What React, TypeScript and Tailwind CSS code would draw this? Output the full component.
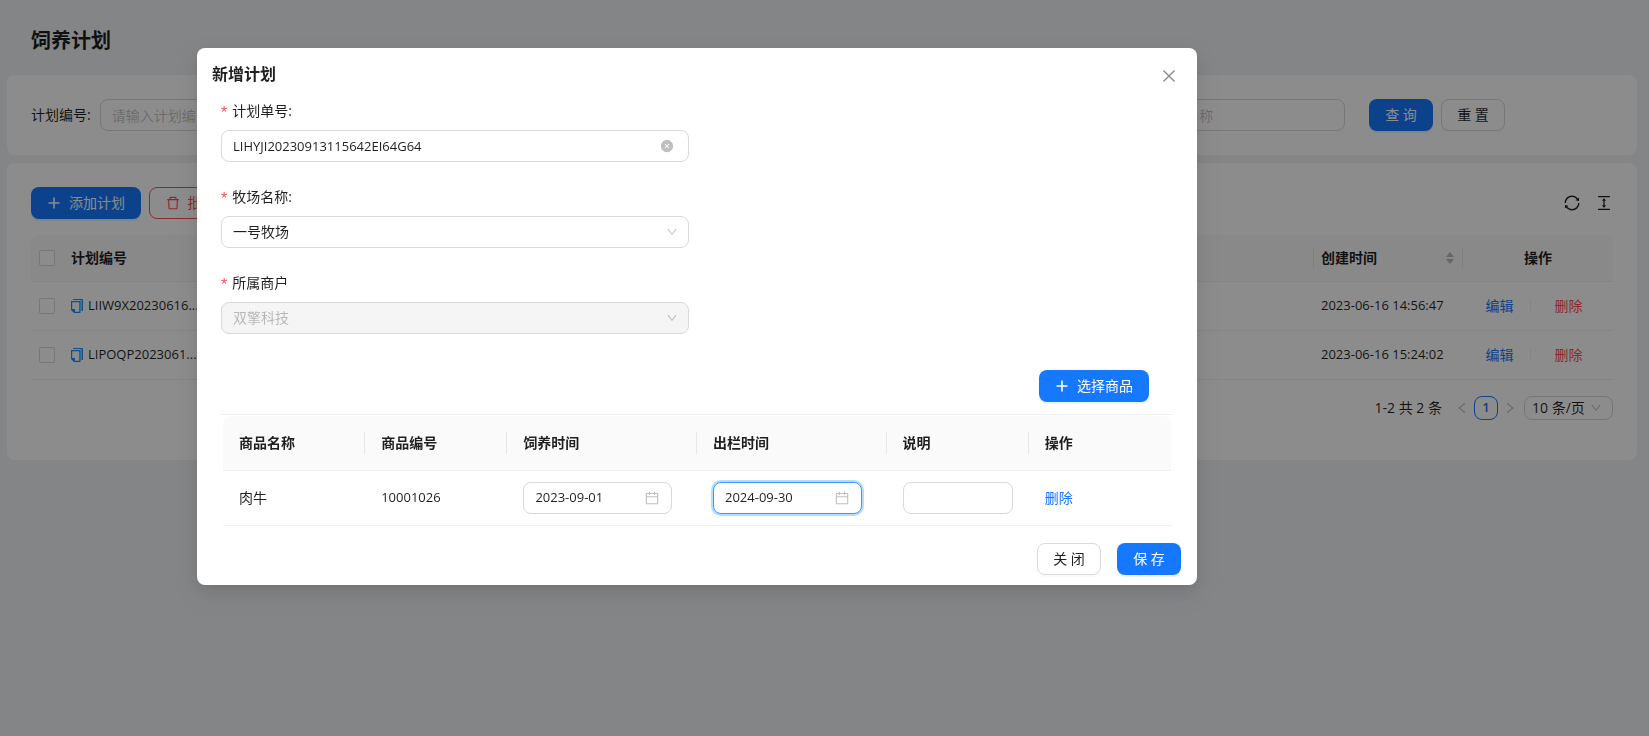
import { useState } from 'react';
import {
  AiFillCloseCircle,
  AiOutlineCalendar,
  AiOutlineClose,
  AiOutlineColumnHeight,
  AiOutlineDelete,
  AiOutlineDown,
  AiOutlineLeft,
  AiOutlineRight,
  AiOutlineSync,
} from 'react-icons/ai';
import clsx from 'clsx';

const FILTERS = [
  { id: 'code', label: '计划编号', placeholder: '请输入计划编号' },
  { id: 'farm', label: '牧场编号', placeholder: '请输入牧场编号' },
  { id: 'merchant', label: '商户名称', placeholder: '请输入商户名称' },
  { id: 'name', label: '牧场名称', placeholder: '请输入牧场名称' },
];

const PLANS = [
  { code: 'LIIW9X20230616...', createdAt: '2023-06-16 14:56:47' },
  { code: 'LIPOQP2023061...', createdAt: '2023-06-16 15:24:02' },
];

const PRIMARY_BUTTON =
  'flex h-8 items-center justify-center rounded-lg bg-[#1677ff] text-white shadow-[0_2px_0_rgba(5,145,255,0.1)]';
const DEFAULT_BUTTON =
  'flex h-8 items-center justify-center rounded-lg border border-[#d9d9d9] bg-white shadow-[0_2px_0_rgba(0,0,0,0.02)]';
const FIELD = 'h-8 w-full rounded-lg border border-[#d9d9d9] bg-white px-[11px] outline-none';

function PlusIcon() {
  return (
    <svg viewBox="0 0 14 14" className="h-[14px] w-[14px]" fill="currentColor" aria-hidden="true">
      <path d="M6.200 1.500h1.600v4.700h4.700v1.600H7.800v4.700H6.200V7.800H1.500V6.200h4.700z" />
    </svg>
  );
}

function CopyIcon() {
  return (
    <svg viewBox="0 0 12 14" className="h-[14px] w-3 shrink-0" fill="none" aria-hidden="true">
      <path fill="#8fc5ff" d="M9.500 1H12v11H9.500z" />
      <path stroke="#1890ff" d="M2 .5h9.500V12" />
      <path stroke="#1890ff" strokeWidth="1.200" d="M.6 2.600h8.300v10.800H3.300L.6 10.700z" />
      <path fill="#1890ff" d="M.6 10h3.400v3.400H3L.6 11z" />
    </svg>
  );
}

function Sorter() {
  return (
    <svg viewBox="0 0 10 14" className="h-[14px] w-[10px] text-black/25" fill="currentColor" aria-hidden="true">
      <path d="M5 1 9.200 6H.8zM5 13 .8 8h8.400z" />
    </svg>
  );
}

function SearchCard() {
  return (
    <form className="flex gap-6 rounded-lg bg-white p-6" onSubmit={(e) => e.preventDefault()}>
      {FILTERS.map((item) => (
        <div key={item.id} className="flex min-w-0 flex-1 items-center gap-[9px]">
          <label htmlFor={item.id} className="shrink-0">
            {item.label}:
          </label>
          <input
            id={item.id}
            placeholder={item.placeholder}
            className={clsx(FIELD, 'min-w-0 placeholder:text-black/25')}
          />
        </div>
      ))}
      <div className="flex w-[244px] shrink-0 gap-2">
        <button type="submit" className={clsx(PRIMARY_BUTTON, 'w-16')}>
          查 询
        </button>
        <button type="reset" className={clsx(DEFAULT_BUTTON, 'w-16')}>
          重 置
        </button>
      </div>
    </form>
  );
}

function PlanTable() {
  return (
    <table className="w-full table-fixed text-left">
      <colgroup>
        <col className="w-8" />
        <col className="w-[150px]" />
        <col />
        <col className="w-[150px]" />
        <col className="w-[150px]" />
      </colgroup>
      <thead>
        <tr className="h-[46px] border-b border-[#f0f0f0]">
          <th className="rounded-tl-lg bg-[#fafafa]">
            <Checkbox label="全选" />
          </th>
          <th className="bg-[#fafafa] px-2 font-semibold">计划编号</th>
          <th className="bg-[#fafafa] px-2 font-semibold">牧场名称</th>
          <th className="bg-[#fafafa] p-0 font-semibold">
            <div className="flex h-[22px] items-center justify-between border-x border-[#e8e8e8] px-[7px]">
              创建时间
              <Sorter />
            </div>
          </th>
          <th className="rounded-tr-lg bg-[#fafafa] px-2 text-center font-semibold">操作</th>
        </tr>
      </thead>
      <tbody>
        {PLANS.map((plan) => (
          <tr key={plan.code} className="h-[49px] border-b border-[#f0f0f0]">
            <td>
              <Checkbox label={plan.code} />
            </td>
            <td className="px-2">
              <div className="flex items-center gap-[5px] whitespace-nowrap text-[13px]">
                <CopyIcon />
                {plan.code}
              </div>
            </td>
            <td className="px-2">一号牧场</td>
            <td className="px-2 text-[13px] whitespace-nowrap">{plan.createdAt}</td>
            <td className="pr-2">
              <div className="flex items-center justify-center">
                <a href="#edit" className="text-[#1677ff]">
                  编辑
                </a>
                <span className="mr-6 ml-4 h-3 w-px bg-[#f0f0f0]" />
                <a href="#delete" className="text-[#ff4d4f]">
                  删除
                </a>
              </div>
            </td>
          </tr>
        ))}
      </tbody>
    </table>
  );
}

function Checkbox({ label }: { label: string }) {
  return (
    <input
      type="checkbox"
      aria-label={label}
      className="ml-2 block h-4 w-4 appearance-none rounded-xs border border-[#d9d9d9] bg-white"
    />
  );
}

function Pagination() {
  return (
    <div className="my-4 flex items-center justify-end">
      <span className="mr-2">1-2 共 2 条</span>
      <button aria-label="上一页" className="flex h-6 w-6 items-center justify-center text-black/25">
        <AiOutlineLeft size={14} />
      </button>
      <button className="h-6 w-6 rounded-lg border border-[#1677ff] bg-white text-[13px] font-semibold text-[#1677ff]">
        1
      </button>
      <button aria-label="下一页" className="mr-0.5 flex h-6 w-6 items-center justify-center text-black/25">
        <AiOutlineRight size={14} />
      </button>
      <div className="relative w-[89px]">
        <select
          aria-label="每页条数"
          className="block h-6 w-full appearance-none rounded-lg border border-[#d9d9d9] bg-white pl-[7px] leading-[22px]"
        >
          <option>10 条/页</option>
        </select>
        <AiOutlineDown size={12} className="pointer-events-none absolute top-1.5 right-[11px] text-black/25" />
      </div>
    </div>
  );
}

function FormItem({
  id,
  label,
  children,
}: {
  id: string;
  label: string;
  children: React.ReactNode;
}) {
  return (
    <div className="mb-6 w-[468px] max-w-full">
      <label htmlFor={id} className="mb-2 flex h-[22px] items-center gap-[5px]">
        <span className="pt-1 font-['Liberation_Sans'] text-base text-[#ff4d4f]">*</span>
        {label}
      </label>
      <div className="relative">{children}</div>
    </div>
  );
}

function DateField({ label, value, focused }: { label: string; value: string; focused?: boolean }) {
  return (
    <div
      className={clsx(
        'flex h-8 w-[149px] items-center rounded-lg border bg-white px-[11px]',
        focused ? 'border-[#4096ff] shadow-[0_0_0_2px_rgba(5,145,255,0.3)]' : 'border-[#d9d9d9]'
      )}
    >
      <input aria-label={label} defaultValue={value} className="min-w-0 flex-1 text-[13px] outline-none" />
      <AiOutlineCalendar size={16} className="shrink-0 text-black/25" />
    </div>
  );
}

function CreatePlanDialog({ onClose }: { onClose: () => void }) {
  const [code, setCode] = useState('LIHYJI20230913115642EI64G64');
  const columns = ['商品名称', '商品编号', '饲养时间', '出栏时间', '说明', '操作'];

  return (
    <div className="fixed inset-0 bg-black/45">
      <div
        role="dialog"
        aria-labelledby="dialog-title"
        className="mt-12 ml-[197px] w-[1000px] rounded-lg bg-white pb-2.5 shadow-[0_6px_16px_rgba(0,0,0,0.08),0_3px_6px_-4px_rgba(0,0,0,0.12),0_9px_28px_8px_rgba(0,0,0,0.05)]"
      >
        {/* Header */}
        <div className="flex h-[52px] items-center justify-between pr-[19px] pl-[15px]">
          <h2 id="dialog-title" className="text-base font-semibold">
            新增计划
          </h2>
          <button aria-label="关闭窗口" className="mt-1 text-black/45" onClick={onClose}>
            <AiOutlineClose size={18} />
          </button>
        </div>

        {/* Form */}
        <div className="px-6">
          <FormItem id="plan-code" label="计划单号:">
            <input
              id="plan-code"
              value={code}
              onChange={(e) => setCode(e.target.value)}
              className={clsx(FIELD, 'block text-[13px]')}
            />
            <button
              aria-label="清空"
              className="absolute top-[9px] right-[15px] text-black/25"
              onClick={() => setCode('')}
            >
              <AiFillCloseCircle size={14} />
            </button>
          </FormItem>
          <FormItem id="plan-farm" label="牧场名称:">
            <select id="plan-farm" className={clsx(FIELD, 'block appearance-none')}>
              <option>一号牧场</option>
            </select>
            <AiOutlineDown size={12} className="pointer-events-none absolute top-2.5 right-[11px] text-black/25" />
          </FormItem>
          <FormItem id="plan-merchant" label="所属商户">
            <select
              id="plan-merchant"
              disabled
              className="block h-8 w-full appearance-none rounded-lg border border-[#d9d9d9] bg-[#f5f5f5] px-[11px] text-black/25 opacity-100"
            >
              <option>双擎科技</option>
            </select>
            <AiOutlineDown size={12} className="pointer-events-none absolute top-2.5 right-[11px] text-black/25" />
          </FormItem>

          {/* Goods */}
          <div className="flex justify-end border-b border-[#f0f0f0] px-6 py-3">
            <button className={clsx(PRIMARY_BUTTON, 'w-[110px] gap-2')}>
              <PlusIcon />
              选择商品
            </button>
          </div>
          <div className="px-0.5 pt-px">
            <table className="w-full table-fixed text-left">
              <colgroup>
                <col className="w-[15%]" />
                <col className="w-[15%]" />
                <col className="w-[20%]" />
                <col className="w-[20%]" />
                <col className="w-[15%]" />
                <col className="w-[15%]" />
              </colgroup>
              <thead>
                <tr className="h-[54px] border-b border-[#f0f0f0]">
                  {columns.map((name, i) => (
                    <th
                      key={name}
                      className="bg-[#fafafa] p-0 font-semibold first:rounded-tl-lg last:rounded-tr-lg"
                    >
                      <div
                        className={clsx(
                          'h-[22px] pl-4 leading-[22px]',
                          i < columns.length - 1 && 'border-r border-[#e8e8e8]'
                        )}
                      >
                        {name}
                      </div>
                    </th>
                  ))}
                </tr>
              </thead>
              <tbody>
                <tr className="h-[55px] border-b border-[#f0f0f0]">
                  <td className="px-4">肉牛</td>
                  <td className="px-4 text-[13px]">10001026</td>
                  <td className="px-4">
                    <DateField label="饲养时间" value="2023-09-01" />
                  </td>
                  <td className="px-4">
                    <DateField label="出栏时间" value="2024-09-30" focused />
                  </td>
                  <td className="px-4">
                    <input aria-label="说明" className={clsx(FIELD, 'block')} />
                  </td>
                  <td className="px-4">
                    <a href="#remove" className="text-[#1677ff]">
                      删除
                    </a>
                  </td>
                </tr>
              </tbody>
            </table>
          </div>
        </div>

        {/* Footer */}
        <div className="flex justify-end gap-4 px-4 pt-[17px]">
          <button className={clsx(DEFAULT_BUTTON, 'w-16')} onClick={onClose}>
            关 闭
          </button>
          <button className={clsx(PRIMARY_BUTTON, 'w-16')}>保 存</button>
        </div>
      </div>
    </div>
  );
}

export default function App() {
  const [open, setOpen] = useState(true);

  return (
    <div className="min-h-screen bg-[#f0f2f5] pr-3 pl-[7px] font-['Open_Sans','Noto_Sans_CJK_SC',sans-serif] text-sm text-black/88">
      <h1 className="flex h-[75px] items-center pt-1.5 pl-6 text-xl font-semibold">饲养计划</h1>
      <SearchCard />
      <div className="mt-2 rounded-lg bg-white p-6">
        <div className="mb-4 flex items-center gap-2">
          <button className={clsx(PRIMARY_BUTTON, 'w-[110px] gap-2')} onClick={() => setOpen(true)}>
            <PlusIcon />
            添加计划
          </button>
          <button className="flex h-8 w-[110px] items-center justify-center gap-[7px] rounded-lg border border-[#ff4d4f] bg-white text-[#ff4d4f]">
            <AiOutlineDelete size={16} />
            批量删除
          </button>
          <div className="ml-auto flex gap-3.5">
            <button aria-label="刷新">
              <AiOutlineSync size={18} />
            </button>
            <button aria-label="密度">
              <AiOutlineColumnHeight size={18} />
            </button>
          </div>
        </div>
        <PlanTable />
        <Pagination />
      </div>
      {open && <CreatePlanDialog onClose={() => setOpen(false)} />}
    </div>
  );
}
